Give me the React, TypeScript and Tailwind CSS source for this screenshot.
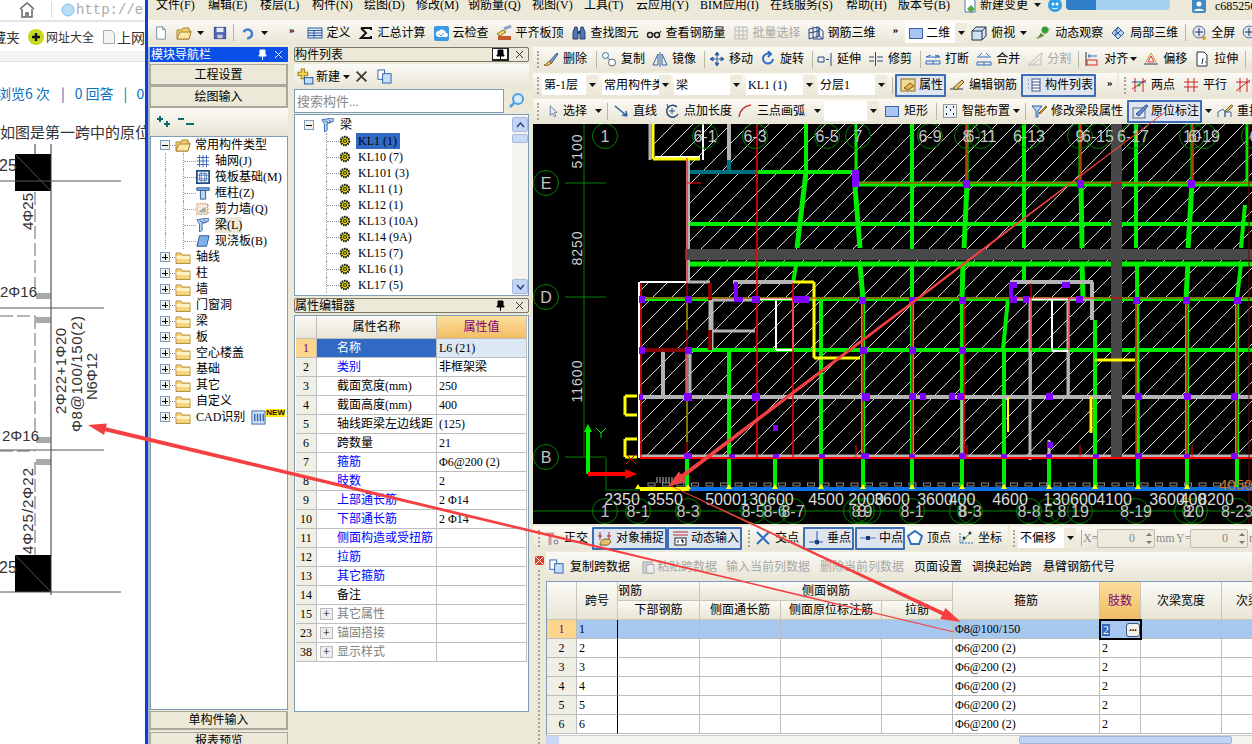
import React from "react";

type L = [number, number, number, number, number?];

const ICONS: Record<string, React.ReactNode> = {
  file: <><path d="M3 1h7l3 3v11H3z" fill="#fff" stroke="#6b7f9c" /><path d="M10 1v3h3" fill="#dfe7f2" stroke="#6b7f9c" /></>,
  folder: <><path d="M1 5h5l1-2h6v3h2l-2 8H1z" fill="#f4cf72" stroke="#a8842f" /><path d="M1 14l3-7h11l-2 7z" fill="#fbe6a6" stroke="#a8842f" /></>,
  save: <><rect x="1.5" y="1.5" width="13" height="13" fill="#4f67b5" stroke="#2c3f80" /><rect x="4" y="2" width="8" height="5" fill="#e8eef8" /><rect x="5" y="10" width="6" height="4" fill="#c7ccd6" /></>,
  undo: <path d="M3 7a5 5 0 1 1 4 7" fill="none" stroke="#3f7fd6" strokeWidth="3" />,
  def: <><rect x="1" y="3" width="14" height="10" fill="#dbe8f8" stroke="#2f5d9e" /><path d="M1 5.5h14M7 5.500v7.500M1 8h14M1 10.500h14" stroke="#2f5d9e" fill="none" /></>,
  sum: <path d="M3 3h10v2M3 3l5 5-5 5h10v-2" fill="none" stroke="#111" strokeWidth="2" />,
  cloud: <><rect x="1" y="1" width="15" height="15" rx="2" fill="#3a9be4" /><path d="M3 10a3 3 0 0 1 3-4 4 4 0 0 1 7 2 2 2 0 0 1 0 4H5z" fill="#fff" /><path d="M6 9l2 2 3-3" fill="none" stroke="#3a9be4" /></>,
  level: <><path d="M1 9l6-4 3 2-6 4z" fill="#f9d95b" stroke="#8a6d1b" /><path d="M8 4l7-3" stroke="#8da3c4" strokeWidth="3" /><rect x="2" y="11" width="13" height="4" fill="#c45a2c" /></>,
  binoc: <><path d="M2 14V7l2-5h2l1 5v7zM9 14V7l1-5h2l2 5v7z" fill="#4f78b8" stroke="#22416f" /><rect x="6.500" y="6" width="3" height="3" fill="#22416f" /></>,
  glass: <><circle cx="4" cy="10" r="2.500" fill="none" stroke="#222" strokeWidth="1.500" /><circle cx="11" cy="10" r="2.500" fill="none" stroke="#222" strokeWidth="1.500" /><path d="M6 9h3M13 9l2-3" stroke="#222" /></>,
  batch: <path d="M2 2h12v12H2zM2 6h12M2 10h12M6 2v12M10 2v12" fill="none" stroke="#bbb" />,
  g3d: <path d="M1 4l10-2v9L1 14zM5 1.500v12M9 1.500v12M1 8l10-2M11 3l4 3v8l-4-3zM5 14h10" fill="none" stroke="#28478c" />,
  rect: <rect x="1.500" y="3.500" width="13" height="10" fill="#a8c4f0" stroke="#3a64a8" />,
  box: <><path d="M1 6l4-4h10v9l-4 4H1z" fill="#cfe2f4" stroke="#234" /><path d="M1 6h10v9M11 6l4-4" fill="none" stroke="#234" /></>,
  orbit: <><circle cx="10" cy="5" r="3.500" fill="#2e9c3a" /><path d="M2 14l4-6 3 3z" fill="#5b6f2c" /><path d="M1 12c4 2 10-3 14-9" fill="none" stroke="#7bb84a" /></>,
  l3d: <path d="M2 8l6-6 6 6-6 6zM5 5l6 6M8 2l-3 9M11 5l-6 6" fill="#bcd6f2" stroke="#2f5d9e" />,
  zoom: <><circle cx="8" cy="7" r="6" fill="#dbe7f6" stroke="#56688a" /><path d="M8 3v8M4 7h8" stroke="#234" /><circle cx="13" cy="13" r="2" fill="#d89a45" /></>,
  brush: <><path d="M6 11L14 2l1 1-7 10z" fill="#7f9ec9" stroke="#3d5a8c" /><path d="M1 14c3 0 3-4 6-4l1 2c-1 2-4 3-7 2z" fill="#e9c25c" stroke="#8a6d1b" /></>,
  copy: <><circle cx="4.500" cy="4.500" r="3" fill="#fff" stroke="#3a6aa8" /><circle cx="11" cy="11.500" r="3.500" fill="#fff" stroke="#666" /><path d="M6 6l3 3" stroke="#3a6aa8" /></>,
  mirror: <path d="M1 14L6 3v11zM15 14L10 3v11zM8 1v15" fill="none" stroke="#3460a8" />,
  move: <path d="M8 1v14M1 8h14M8 1L6 4h4zM8 15l-2-3h4zM1 8l3-2v4zM15 8l-3-2v4z" fill="#3460a8" stroke="#3460a8" />,
  rotate: <path d="M13 8a5 5 0 1 1-3-5M8 0l3 3-3 3" fill="none" stroke="#2f6cc4" strokeWidth="2" />,
  extend: <path d="M1 6h6v5H1zM9 8.500h3M14 2v13" fill="none" stroke="#234a84" />,
  trim: <path d="M1 6h5M1 10h5M9 6h6M9 10h6M7.500 1v14" fill="none" stroke="#234a84" />,
  split: <path d="M6 4L1 6h14l-5-2M10 7l4-3M1 10h14v3H1zM8 10v3" fill="none" stroke="#2f6cc4" />,
  merge: <path d="M3 5l3-3M13 5l-3-3M1 6h14M1 11h14v3H1zM8 11v3" fill="none" stroke="#2f6cc4" />,
  divide: <path d="M1 14L12 4l3-2-1 5v7zM5 14l7-6" fill="none" stroke="#bcbcbc" />,
  align: <><path d="M2 1v14" stroke="#234" /><rect x="3" y="9" width="10" height="5" fill="none" stroke="#d22" /><path d="M4 5h9M4 5l2-2M4 5l2 2" fill="none" stroke="#2f6cc4" /></>,
  offset: <><path d="M8 2l6 11H2z" fill="#f7f7f7" stroke="#c93" /><path d="M8 5l3 6H5z" fill="none" stroke="#d33" /><path d="M1 13h14" stroke="#2d6bbd" /></>,
  stretch: <path d="M3 1h7l3 3v11H3zM9 7l-1 6M11 11h1" fill="#fff" stroke="#234" />,
  attr: <><rect x="1" y="2" width="14" height="12" fill="#f1d99a" stroke="#8a6d1b" /><path d="M4 11l6-5 4 3-6 4z" fill="#e5b24b" stroke="#7c5c11" /></>,
  edit: <><path d="M1 12h13" stroke="#333" /><path d="M4 11l9-8 2 2-8 8z" fill="#e4c36a" stroke="#6d5a20" /></>,
  list: <><path d="M2 3h2M2 7h2M2 11h2" stroke="#567" strokeDasharray="1 1" fill="none" /><rect x="6" y="2" width="8" height="12" fill="#fff" stroke="#3d5a8c" /><path d="M6 5h8M6 8h8M6 11h8" stroke="#3d5a8c" /></>,
  twopt: <><path d="M4 1v14M12 1v14M1 12L15 3" stroke="#c22" fill="none" /><path d="M1 5h14" stroke="#234a84" /><circle cx="8" cy="8" r="1.500" fill="#2a2" /></>,
  para: <path d="M1 5h14M1 10h14M5 1v14M11 1v14" stroke="#c22" fill="none" />,
  slant: <><path d="M5 1v14M12 1v14M1 5h14M1 14L15 3" stroke="#c22" fill="none" /></>,
  cursor: <path d="M4 1l8 8-3 .5 2 4-2 1-2-4-3 2z" fill="#e8eef8" stroke="#55688a" />,
  line: <><path d="M2 3l12 10M14 13l-5-1M14 13l-1-5" fill="none" stroke="#2f5d9e" strokeWidth="1.500" /></>,
  len: <><path d="M13 4A6 6 0 1 0 14 11" fill="none" stroke="#234a84" strokeWidth="1.500" /><path d="M8 5v6M5 8h6M3 1l1 4 3-3" stroke="#234a84" fill="none" /></>,
  arc: <path d="M2 14C3 7 7 3 14 2" fill="none" stroke="#c33" strokeWidth="1.500" />,
  smart: <><rect x="1.500" y="1.500" width="13" height="13" fill="#e8f0fa" stroke="#444" strokeDasharray="1 1" /><path d="M4 4h1M11 4h1M4 11h1M11 11h1M8 7h1" stroke="#222" strokeWidth="2" /></>,
  filter: <><path d="M1 3h10L7 8v6H5V8z" fill="#bcd6f2" stroke="#3460a8" /><path d="M8 10l7-7 1 1-7 7z" fill="#d9a441" stroke="#7c5c11" /></>,
  annot: <><rect x="1" y="5" width="12" height="10" fill="#dfe7f2" stroke="#567" /><path d="M4 11L14 2l2 1-9 10z" fill="#6b93d6" stroke="#234a84" /></>,
  pull: <><path d="M1 14v-5l5-3 2 3v5M8 14V9h6v5" fill="none" stroke="#3a6aa8" /><path d="M8 8l6-6 2 1-6 6z" fill="#e4c36a" stroke="#6d5a20" /></>,
  ortho: <><path d="M2 4h8M6 4v11" stroke="#c99" strokeWidth="3" /><circle cx="12" cy="12" r="2" fill="none" stroke="#678" /></>,
  snap: <><path d="M3 2v8M12 2v8M1 6h4M10 6h4" stroke="#a23" /><path d="M3 15c0-4 3-6 6-6s6 1 4 4-5 2-10 2z" fill="#e4c36a" stroke="#7c5c11" /></>,
  dyn: <><path d="M1 2h15M1 5h15" stroke="#b33" /><rect x="3" y="8" width="11" height="7" fill="#fff" stroke="#222" /><path d="M6 10v3M9 10h2v3" stroke="#222" /></>,
  cross: <path d="M2 2l12 12M14 2L2 14" stroke="#2f6cc4" strokeWidth="2" fill="none" />,
  perp: <><path d="M1 12h14M9 1v14" stroke="#5b86c4" strokeWidth="1.500" /><rect x="7" y="10" width="4" height="4" fill="#1d3d7a" /></>,
  mid: <><path d="M0 8h16" stroke="#8fb0e0" strokeWidth="2" /><rect x="6" y="6" width="4" height="4" fill="#1d3d7a" /></>,
  vertex: <path d="M8 1l7 5-3 8H4L1 6z" fill="#fff" stroke="#2f6cc4" strokeWidth="2" />,
  coord: <><path d="M2 3v10h13" stroke="#2f6cc4" strokeDasharray="2 1" fill="none" /><path d="M3 13L12 3" stroke="#2a4" /><circle cx="12" cy="3" r="1.500" fill="#234" /><circle cx="6" cy="8" r="1.500" fill="#234" /></>,
  grid: <path d="M1 4h14M1 8h14M1 12h14M4 1v14M8 1v14M12 1v14" stroke="#2f5db0" fill="none" />,
  raft: <><rect x="1" y="1" width="14" height="14" fill="none" stroke="#234a84" strokeWidth="2" /><path d="M4 4h8v8H4zM1 6h14M1 10h14M6 1v14M10 1v14" stroke="#4f78b8" fill="none" /></>,
  col: <><path d="M1 2h14v3H1z" fill="#7fb0e8" stroke="#234a84" /><path d="M5 5h6v10H5z" fill="#bcd6f2" stroke="#234a84" /></>,
  wall: <><rect x="1" y="2" width="12" height="12" fill="#f5ecdc" stroke="#c67b4b" strokeDasharray="2 1" /><path d="M3 12c2-3 5-6 8-6v6z" fill="#aaa" /><path d="M13 4h2M13 8h2M13 12h2" stroke="#e09030" /></>,
  beam: <><path d="M1 2l13-2v4L7 6v8l-3 2V7z" fill="#bcd6f2" stroke="#2f5db0" /><path d="M4 3l6 3M9 2l3 3" stroke="#2f5db0" /></>,
  slab: <path d="M4 2h11l-3 12H1z" fill="#7fb0e8" stroke="#234a84" />,
  gear: <><circle cx="8" cy="8" r="5.500" fill="#ffe800" stroke="#111" strokeDasharray="2 1" strokeWidth="3" /><circle cx="8" cy="8" r="2" fill="#ffe800" stroke="#222" strokeWidth="1.500" /></>,
  add: <><path d="M4 1h3v3h3v3H7v3H4V7H1V4h3z" fill="#f3d356" stroke="#a5861d" /><rect x="7" y="9" width="8" height="6" fill="#c7dcf5" stroke="#2f5db0" /></>,
  del: <path d="M2 2l12 12M14 2L2 14" stroke="#3a3a3a" strokeWidth="2.200" />,
  dup: <><rect x="1" y="1" width="7" height="10" fill="#fff" stroke="#2f5db0" /><rect x="6" y="5" width="9" height="10" fill="#c7dcf5" stroke="#2f5db0" /></>,
  paste: <><rect x="2" y="3" width="10" height="12" fill="#cfcfcf" stroke="#aaa" /><rect x="6" y="6" width="8" height="9" fill="#eee" stroke="#aaa" /></>,
  search: <><circle cx="9" cy="6" r="5" fill="#d9ecfb" stroke="#4aa2e2" strokeWidth="2" /><path d="M5 10l-4 4" stroke="#4aa2e2" strokeWidth="2.500" /></>,
  user: <><rect x="1" y="1" width="14" height="14" rx="2" fill="#3f89c9" /><circle cx="8" cy="6" r="2.500" fill="#fff" /><path d="M3 13c1-3 9-3 10 0z" fill="#fff" /></>,
  face: <><circle cx="8" cy="8" r="7" fill="#2f9ee8" /><circle cx="6" cy="7" r="1.500" fill="#fff" /><circle cx="10" cy="7" r="1.500" fill="#fff" /><path d="M5 11c2 1 4 1 6 0" stroke="#fff" fill="none" /></>,
  change: <><path d="M3 1h7l3 3v11H3z" fill="#fff" stroke="#4f78b8" /><path d="M9 8l4 4-4 4-4-4z" fill="#5aa83e" /></>,
  cad: <><rect x="1" y="1" width="14" height="14" fill="#cfe2f8" stroke="#3a64a8" /><path d="M4 4v8M7 4v8M10 4v8M13 4v8" stroke="#3a64a8" strokeWidth="1.500" /></>,
};

function Ic({ n, s = 16 }: { n: string; s?: number }) {
  return (
    <svg width={s} height={s} viewBox="0 0 16 16" className="shrink-0">
      {ICONS[n]}
    </svg>
  );
}

function Caret({ ml = "" }: { ml?: string }) {
  return (
    <svg width="7" height="4" viewBox="0 0 7 4" className={`shrink-0 ${ml}`}>
      <path d="M0 0h7L3.500 4z" fill="#111" />
    </svg>
  );
}

function Sep({ ml = "" }: { ml?: string }) {
  return <div className={`w-px h-[17px] bg-[#b9b7a6] shrink-0 ${ml}`} />;
}

function Grip({ ml = "" }: { ml?: string }) {
  return <div className={`w-[3px] h-[17px] shrink-0 border-l-2 border-dotted border-[#a8a693] ${ml}`} />;
}

function T({ i, t, ml = "", gray = false }: { i: string; t: string; ml?: string; gray?: boolean }) {
  return (
    <div className={`flex items-center shrink-0 ${ml}`}>
      <Ic n={i} />
      <span className={`ml-1 whitespace-nowrap ${gray ? "text-[#a8a8a8]" : ""}`}>{t}</span>
    </div>
  );
}

function Sel({ i, t, ml = "", w }: { i: string; t: string; ml?: string; w: string }) {
  return (
    <div className={`flex items-center shrink-0 h-[23px] px-[3px] border-2 border-[#3d6db4] bg-[#dfe5ee] rounded-[1px] ${w} ${ml}`}>
      <Ic n={i} />
      <span className="ml-[3px] whitespace-nowrap">{t}</span>
    </div>
  );
}

function Combo({ t, w, ml = "" }: { t: string; w: string; ml?: string }) {
  return (
    <div className={`flex items-center shrink-0 h-[20px] bg-white ${w} ${ml}`}>
      <span className="pl-[2px] flex-1 overflow-hidden whitespace-nowrap">{t}</span>
      <div className="w-[12px] h-full bg-[#eeebdd] flex items-center justify-center">
        <Caret />
      </div>
    </div>
  );
}

function More({ ml = "" }: { ml?: string }) {
  return <span className={`shrink-0 font-bold text-[11px] -mt-[6px] ${ml}`}>»</span>;
}

const BAR = "bg-linear-to-b from-[#fbfaf5] to-[#e8e5d5]";

function Menu() {
  const m: [string, string][] = [
    ["文件(F)", "w-[40px]"], ["编辑(E)", "w-[40px]"], ["楼层(L)", "w-[40px]"], ["构件(N)", "w-[40px]"],
    ["绘图(D)", "w-[40px]"], ["修改(M)", "w-[40px]"], ["钢筋量(Q)", "w-[52px]"], ["视图(V)", "w-[40px]"],
    ["工具(T)", "w-[40px]"], ["云应用(Y)", "w-[52px]"], ["BIM应用(I)", "w-[58px]"], ["在线服务(S)", "w-[64px]"],
    ["帮助(H)", "w-[40px]"], ["版本号(B)", "w-[52px]"],
  ];
  return (
    <div className="h-[20px] flex items-start pl-2 gap-3 overflow-hidden relative bg-[#ece9d8] shrink-0">
      <div className="flex gap-3 -mt-[1px] leading-[13px]">
        {m.map(([t, w]) => (
          <span key={t} className={`whitespace-nowrap ${w}`}>{t}</span>
        ))}
      </div>
      <div className="flex items-center -mt-[3px]">
        <Ic n="change" />
        <span className="ml-[2px]">新建变更</span>
        <Caret ml="ml-[6px]" />
        <div className="ml-[6px]"><Ic n="face" /></div>
      </div>
      <div className="absolute left-[918px] top-0 w-[104px] h-[10px] rounded-b-[4px] overflow-hidden flex">
        <div className="w-[30px] bg-[#2f7fc9]" />
        <div className="flex-1 bg-[#a6d2f2]" />
      </div>
      <div className="absolute left-[1043px] top-[-2px] flex items-center">
        <Ic n="user" />
        <span className="ml-2 whitespace-nowrap">c685256</span>
      </div>
    </div>
  );
}

function MainBar() {
  return (
    <div className={`h-[25px] flex items-center shrink-0 overflow-hidden ${BAR}`}>
      <div className="ml-[6px]"><Ic n="file" s={14} /></div>
      <div className="ml-[8px]"><Ic n="folder" /></div>
      <Caret ml="ml-[5px]" />
      <div className="ml-[9px]"><Ic n="save" s={14} /></div>
      <Sep ml="ml-[6px]" />
      <div className="ml-[7px]"><Ic n="undo" s={14} /></div>
      <Caret ml="ml-[6px]" />
      <More ml="ml-[21px]" />
      <T i="def" t="定义" ml="ml-[12px]" />
      <T i="sum" t="汇总计算" ml="ml-[7px]" />
      <T i="cloud" t="云检查" ml="ml-[7px]" />
      <T i="level" t="平齐板顶" ml="ml-[7px]" />
      <T i="binoc" t="查找图元" ml="ml-[7px]" />
      <T i="glass" t="查看钢筋量" ml="ml-[7px]" />
      <T i="batch" t="批量选择" ml="ml-[7px]" gray />
      <T i="g3d" t="钢筋三维" ml="ml-[7px]" />
      <More ml="ml-[17px]" />
      <div className="ml-[7px] w-[62px] h-[20px] bg-white flex items-center shrink-0">
        <div className="ml-[3px]"><Ic n="rect" /></div>
        <span className="ml-[2px] flex-1">二维</span>
        <div className="w-[12px] h-full bg-[#eeebdd] flex items-center justify-center"><Caret /></div>
      </div>
      <T i="box" t="俯视" ml="ml-[4px]" />
      <Caret ml="ml-[5px]" />
      <T i="orbit" t="动态观察" ml="ml-[8px]" />
      <T i="l3d" t="局部三维" ml="ml-[7px]" />
      <Sep ml="ml-[7px]" />
      <T i="zoom" t="全屏" ml="ml-[5px]" />
      <div className="ml-[6px]"><Ic n="zoom" /></div>
    </div>
  );
}

function Row1() {
  return (
    <div className={`h-[24px] flex items-center shrink-0 overflow-hidden ${BAR}`}>
      <Grip ml="ml-[4px]" />
      <T i="brush" t="删除" ml="ml-[3px]" />
      <Sep ml="ml-[9px]" />
      <T i="copy" t="复制" ml="ml-[4px]" />
      <T i="mirror" t="镜像" ml="ml-[7px]" />
      <Sep ml="ml-[8px]" />
      <T i="move" t="移动" ml="ml-[4px]" />
      <T i="rotate" t="旋转" ml="ml-[7px]" />
      <Sep ml="ml-[8px]" />
      <T i="extend" t="延伸" ml="ml-[4px]" />
      <T i="trim" t="修剪" ml="ml-[7px]" />
      <Sep ml="ml-[8px]" />
      <T i="split" t="打断" ml="ml-[4px]" />
      <T i="merge" t="合并" ml="ml-[7px]" />
      <T i="divide" t="分割" ml="ml-[7px]" gray />
      <Sep ml="ml-[7px]" />
      <T i="align" t="对齐" ml="ml-[5px]" />
      <Caret ml="ml-[2px]" />
      <T i="offset" t="偏移" ml="ml-[6px]" />
      <T i="stretch" t="拉伸" ml="ml-[7px]" />
      <Sep ml="ml-[7px]" />
    </div>
  );
}

function Row2() {
  return (
    <div className="h-[24px] flex items-center shrink-0 overflow-hidden">
      <div className={`h-full w-[584px] flex items-center shrink-0 ${BAR}`}>
        <Grip ml="ml-[4px]" />
        <Combo t="第-1层" w="w-[56px]" ml="ml-[2px]" />
        <Combo t="常用构件类型" w="w-[69px]" ml="ml-[4px]" />
        <Combo t="梁" w="w-[68px]" ml="ml-[3px]" />
        <Combo t="KL1 (1)" w="w-[69px]" ml="ml-[4px]" />
        <Combo t="分层1" w="w-[69px]" ml="ml-[3px]" />
        <Sep ml="ml-[5px]" />
        <Sel i="attr" t="属性" w="w-[51px]" ml="ml-[2px]" />
        <T i="edit" t="编辑钢筋" ml="ml-[3px]" />
        <Sel i="list" t="构件列表" w="w-[75px]" ml="ml-[4px]" />
        <More ml="ml-[11px]" />
      </div>
      <div className={`ml-[2px] h-full flex-1 flex items-center ${BAR}`}>
        <Grip ml="ml-[5px]" />
        <T i="twopt" t="两点" ml="ml-[4px]" />
        <T i="para" t="平行" ml="ml-[8px]" />
        <div className="ml-[8px]"><Ic n="slant" /></div>
      </div>
    </div>
  );
}

function Row3() {
  return (
    <div className={`h-[24px] flex items-center shrink-0 overflow-hidden ${BAR}`}>
      <Grip ml="ml-[4px]" />
      <div className="ml-[7px]"><Ic n="cursor" s={13} /></div>
      <span className="ml-[3px] shrink-0">选择</span>
      <Caret ml="ml-[8px]" />
      <Sep ml="ml-[5px]" />
      <T i="line" t="直线" ml="ml-[5px]" />
      <T i="len" t="点加长度" ml="ml-[7px]" />
      <T i="arc" t="三点画弧" ml="ml-[5px]" />
      <Caret ml="ml-[9px]" />
      <Combo t="" w="w-[55px]" ml="ml-[3px]" />
      <T i="rect" t="矩形" ml="ml-[5px]" />
      <Sep ml="ml-[8px]" />
      <T i="smart" t="智能布置" ml="ml-[5px]" />
      <Caret ml="ml-[3px]" />
      <Sep ml="ml-[5px]" />
      <T i="filter" t="修改梁段属性" ml="ml-[5px]" />
      <Sel i="annot" t="原位标注" w="w-[75px]" ml="ml-[4px]" />
      <Caret ml="ml-[3px]" />
      <T i="pull" t="重拉" ml="ml-[5px]" />
    </div>
  );
}

function StatusBar() {
  return (
    <div className="h-[24px] mt-[2px] flex items-center shrink-0 overflow-hidden">
      <div className={`h-full w-[475px] flex items-center shrink-0 ${BAR}`}>
        <Grip ml="ml-[5px]" />
        <T i="ortho" t="正交" ml="ml-[3px]" />
        <Sel i="snap" t="对象捕捉" w="w-[75px]" ml="ml-[4px]" />
        <Sel i="dyn" t="动态输入" w="w-[75px]" />
        <Grip ml="ml-[6px]" />
        <T i="cross" t="交点" ml="ml-[4px]" />
        <Sel i="perp" t="垂点" w="w-[51px]" ml="ml-[4px]" />
        <Sel i="mid" t="中点" w="w-[50px]" ml="ml-[1px]" />
        <T i="vertex" t="顶点" ml="ml-[2px]" />
        <T i="coord" t="坐标" ml="ml-[7px]" />
      </div>
      <div className={`ml-[2px] h-full flex-1 flex items-center ${BAR}`}>
        <Grip ml="ml-[3px]" />
        <Combo t="不偏移" w="w-[58px]" ml="ml-[2px]" />
        <div className="ml-[5px] w-px h-[16px] bg-[#aaa]" />
        <span className="ml-[1px] w-[14px] text-[#888]">X=</span>
        <Num />
        <span className="ml-[1px] w-[20px] text-[#888]">mm</span>
        <span className="w-[14px] text-[#888]">Y=</span>
        <Num />
        <span className="ml-[1px] text-[#888]">m</span>
      </div>
    </div>
  );
}

function Num() {
  return (
    <div className="w-[58px] h-[19px] border border-[#bdbbaa] bg-[#eeebdd] rounded-[2px] flex items-center justify-end shrink-0">
      <span className="text-[#888] mr-[9px]">0</span>
      <div className="w-[10px] flex flex-col items-center gap-[5px]">
        <svg width="6" height="3" viewBox="0 0 6 3"><path d="M0 3L3 0l3 3z" fill="#777" /></svg>
        <svg width="6" height="3" viewBox="0 0 6 3"><path d="M0 0l3 3 3-3z" fill="#777" /></svg>
      </div>
    </div>
  );
}

/* ---------- CAD canvas ---------- */
const GRN: L[] = [
  [757,172,853,172,4],[690,224,1252,224,4],[690,264,1252,264,5],[853,184,1252,184,5],[640,299,1252,299,4],[686,350,1252,350,4],
  [806,124,806,172,4],[806,172,797,248,5],[796,265,793,283,4],
  [856,124,856,170,3],[855,187,860,248,5],[860,265,863,299,5],[863,299,863,490,4],
  [687,299,687,330,2],[687,350,687,442,2],[687,458,687,490,4],[729,350,729,490,4],[775,458,775,490,4],[821,300,821,490,4],
  [912,124,912,249,4],[912,264,912,490,4],[967,124,967,183,3],[967,183,964,248,5],[963,264,962,298,5],[962,298,962,490,4],
  [1024,124,1024,248,4],[1024,264,1024,282,4],[1080,124,1080,183,3],[1081,183,1082,248,5],[1082,264,1083,298,5],
  [1136,124,1136,248,4],[1137,264,1138,490,4],[1192,124,1192,183,3],[1192,183,1188,248,5],[1188,264,1186,298,5],[1187,298,1187,490,4],
  [1247,124,1247,183,3],[1245,205,1241,248,4],[1241,264,1237,298,4],[1237,298,1237,490,4],
  [1008,298,1003,350,4],[1004,350,1004,490,4],[1049,458,1049,490,4],[1095,320,1095,490,4],[1031,299,1031,397,2],[1069,300,1069,397,2],
];
const RED: L[] = [
  [757,124,757,458,1.500],[641,283,641,458,1.500],[687,158,687,458,1],[793,283,793,458,1.500],[863,300,863,458,1.500],[912,300,912,458,1.500],
  [964,300,964,458,1.500],[1031,283,1031,350,1],[1069,298,1069,350,1],[1136,300,1136,458,1.500],[1192,124,1192,183,1.500],[967,124,967,183,1.500],
  [1080,124,1080,183,1.500],[1187,300,1187,458,1.500],[1237,300,1237,458,1.500],[853,183,1252,183,1],[640,298,1252,298,1],[640,458,1252,458,2],
  [687,183,701,183,1],[757,445,757,458,1],[856,445,856,458,1],[967,445,967,458,1],[1080,445,1080,458,1],[1192,445,1192,458,1],
];
const GRY: L[] = [
  [688,160,688,283,4],[640,397,1252,397,4],[640,456,1252,456,3],[688,282,710,282,3],[733,282,793,282,4],[650,124,650,160,3],[729,124,729,160,4],
  [711,300,711,350,5],[712,300,755,300,3],[712,331,755,331,3],[1010,282,1093,282,4],[1092,282,1092,320,4],
  [1010,299,1093,299,3],[1030,299,1030,460,3],[1068,299,1068,397,3],[962,397,962,456,3],[1049,440,1049,456,3],[663,350,663,397,4],[687,350,687,397,3],[690,350,690,397,3],
  [925,397,950,397,4],
];
const WHT: L[] = [
  [640,282,688,282,2],[639,282,639,458,2],[655,157,700,157,2],[703,124,703,160,2],[757,299,793,299,2],[776,299,776,350,2],[776,350,793,350,2],[793,299,793,350,2],
  [1031,299,1068,299,2],[1052,299,1052,350,2],[1052,351,1068,351,2],
];
const YEL: L[] = [
  [653,124,653,159,3],[653,159,700,159,3],[793,282,814,282,3],[814,282,814,358,3],[814,358,860,358,3],[1008,397,1008,432,2],[1091,397,1091,433,3],[1095,360,1135,360,3],
  [625,396,637,396,3],[625,396,625,415,3],[625,415,637,415,3],[625,439,637,439,3],[625,439,625,457,3],[625,457,637,457,3],[640,489,689,489,4],
];
const PUR: [number, number, number, number][] = [
  [852,170,7,17],[639,296,6,7],[685,296,7,7],[734,282,4,18],[734,297,9,5],[752,296,8,7],[793,296,16,7],[859,297,7,7],[639,347,6,7],[685,347,7,7],[860,347,7,7],
  [963,180,7,8],[1077,180,7,8],[1188,180,7,8],[909,297,6,7],[959,297,7,7],[1009,282,8,6],[1009,282,4,18],[1009,296,8,7],[1062,282,8,6],[1023,296,6,7],[1076,296,7,7],[1133,297,7,7],[1183,297,7,7],[1234,297,7,7],
  [909,347,7,7],[959,347,7,7],[684,393,8,8],[752,393,8,8],[862,393,8,8],[909,393,7,7],[920,393,6,7],[949,393,6,7],[957,393,7,7],[1046,393,7,7],[1135,393,7,7],[1184,393,7,7],[1231,393,7,7],
  [639,394,4,6],[684,453,8,6],[729,454,6,4],[773,454,6,4],[819,454,6,4],[861,453,8,6],[909,454,6,4],[959,453,7,6],[1001,454,6,4],[1046,454,6,4],[1093,454,6,4],[1135,453,7,6],[1184,454,6,4],[1231,453,7,6],[773,425,5,6],[1047,442,6,6],
];
const CIR: [number, number, string][] = [
  [546,183,"E"],[546,297,"D"],[546,457,"B"],[605,136,"1"],[705,136,"6-1"],[755,136,"6-3"],[827,136,"6-5"],[858,136,"7"],[930,136,"6-9"],[967,136,"8"],[981,136,"6-11"],[1029,136,"6-13"],
  [1080,136,"9"],[1098,136,"6-15"],[1133,136,"6-17"],[1192,136,"10"],[1204,136,"6-19"],[1254,136,"6"],
  [605,511,"1"],[638,511,"8-1"],[688,511,"8-3"],[753,511,"8-5"],[775,511,"8-6"],[793,511,"8-7"],[856,511,"8"],[862,511,"8"],[868,511,"9"],
  [912,511,"8-1"],[962,511,"8"],[970,511,"8-3"],[1029,511,"8-8"],[1049,511,"5"],[1062,511,"8"],[1080,511,"19"],[1136,511,"8-19"],[1187,511,"8"],[1195,511,"20"],[1237,511,"8-23"],
];
const DIM: [number, string][] = [
  [622,"2350"],[665,"3550"],[723,"5000"],[767,"130600"],[826,"4500"],[866,"2000"],[892,"3600"],[935,"3600"],[962,"400"],[1010,"4600"],[1070,"130600"],[1114,"4100"],[1167,"3600"],[1193,"400"],[1216,"8200"],
];

function lines(a: L[], c: string, key: string) {
  return a.map((l, i) => (
    <line key={key + i} x1={l[0]} y1={l[1]} x2={l[2]} y2={l[3]} stroke={c} strokeWidth={l[4] ?? 1} />
  ));
}

function Canvas() {
  const dashes = Array.from({ length: 42 }, (_, i) => 648 + i * 14.500);
  return (
    <div className="h-[400px] mt-[1px] bg-black shrink-0 overflow-hidden">
      <svg width="719" height="400" viewBox="533 124 719 400" className="block">
        <defs>
          <pattern id="hat" width="19" height="19" patternUnits="userSpaceOnUse">
            <path d="M0 19L19 0" stroke="#d8d8d8" strokeWidth="1" shapeRendering="crispEdges" />
          </pattern>
        </defs>
        <path d="M689 124H1252V458H638V283H689Z" fill="url(#hat)" />
        <rect x="652" y="124" width="51" height="36" fill="url(#hat)" />
        {lines([[584,124,584,458,1],[565,183,606,183,1],[565,297,606,297,1],[565,457,606,457,1],[606,490,1252,490,1],[606,458,606,490,1],[533,511,1252,511,1]], "#008000", "a")}
        {lines(GRN, "#00ee00", "g")}
        {lines(GRY, "#b4b4b4", "y")}
        {lines(WHT, "#ffffff", "w")}
        <line x1="690" y1="172" x2="757" y2="172" stroke="#007080" strokeWidth="4" />
        <line x1="729" y1="160" x2="729" y2="172" stroke="#007080" strokeWidth="4" />
        <line x1="710" y1="283" x2="710" y2="300" stroke="#800000" strokeWidth="4" />
        <line x1="710" y1="330" x2="710" y2="350" stroke="#800000" strokeWidth="4" />
        <line x1="640" y1="350" x2="686" y2="350" stroke="#800000" strokeWidth="4" />
        <rect x="685" y="249" width="567" height="11" fill="#484848" />
        <rect x="1111" y="124" width="11" height="334" fill="#484848" />
        {lines(YEL, "#ffff00", "e")}
        {lines(RED, "#ff0000", "r")}
        <line x1="1249" y1="124" x2="1249" y2="524" stroke="#800000" strokeWidth="1" />
        {PUR.map((p, i) => (
          <rect key={i} x={p[0]} y={p[1]} width={p[2]} height={p[3]} fill="#8000ff" />
        ))}
        <rect x="689" y="487" width="563" height="4" fill="#0a72e8" />
        {dashes.map((x, i) => (
          <rect key={i} x={x} y="483" width="7" height="3" fill="none" stroke="#888" strokeWidth="1" />
        ))}
        {[638,688,729,775,821,863,912,962,1004,1049,1095,1138,1187].map((x, i) => (
          <path key={i} d={`M${x - 3} 489l3-5 3 5z`} fill="#ffff00" />
        ))}
        <text x="576" y="145" transform="rotate(-90 582 145)" fill="#ccc" fontFamily="Liberation Sans" fontSize="14" textAnchor="middle" letterSpacing="1">5100</text>
        <text x="576" y="242" transform="rotate(-90 582 242)" fill="#ccc" fontFamily="Liberation Sans" fontSize="14" textAnchor="middle" letterSpacing="1">8250</text>
        <text x="576" y="375" transform="rotate(-90 582 375)" fill="#ccc" fontFamily="Liberation Sans" fontSize="14" textAnchor="middle" letterSpacing="1">11600</text>
        {CIR.map(([x, y, t], i) => (
          <g key={i}>
            <circle cx={x} cy={y} r="12.500" fill="none" stroke="#008000" strokeWidth="1" />
            <text x={x} y={y + 6} fill="#c4c4c4" fontFamily="Liberation Sans" fontSize="16" textAnchor="middle">{t}</text>
          </g>
        ))}
        {DIM.map(([x, t], i) => (
          <text key={i} x={x} y="505" fill="#ddd" fontFamily="Liberation Sans" fontSize="16" textAnchor="middle">{t}</text>
        ))}
        <text x="1219" y="490" fill="#c8703a" fontFamily="Liberation Sans" fontSize="15">4050</text>
        <line x1="588" y1="474" x2="588" y2="430" stroke="#00ee00" strokeWidth="4" />
        <path d="M584 432L588 424l4 8z" fill="#00ee00" />
        <path d="M601 432V438M596 428l5 5 5-5" stroke="#00ee00" fill="none" />
        <line x1="588" y1="474" x2="626" y2="474" stroke="#ff0000" strokeWidth="4" />
        <path d="M625 469l12 5-12 5z" fill="#ff0000" />
        <path d="M626 454l10 10M636 454l-10 10" stroke="#c00" />
        <g stroke="#bbb">{[657,660,663,666,669,672,675,678,681,684].map((x) => <line key={x} x1={x} y1="477" x2={x} y2="483" />)}</g>
      </svg>
    </div>
  );
}

/* ---------- Left CAD ---------- */
function Hook({ y }: { y: number }) {
  return (
    <g stroke="#555" strokeWidth="1">
      <line x1="36" y1={y - 2} x2="51" y2={y - 2} />
      <line x1="36" y1={y} x2="51" y2={y} />
      <line x1="36" y1={y + 2} x2="51" y2={y + 2} />
    </g>
  );
}

function LeftDrawing() {
  const fs = { fill: "#333", fontFamily: "Liberation Sans" };
  return (
    <svg width="145" height="456" viewBox="0 144 145 456" className="block mt-[2px] shrink-0">
      <rect x="15" y="154" width="36" height="37" fill="#000" />
      <rect x="15" y="555" width="36" height="37" fill="#000" />
      <path d="M15 154l36 37M15 555l36 37" stroke="#555" />
      <path d="M35 144v10M51 144V595" stroke="#333" fill="none" />
      <path d="M0 181h121M0 592h121M0 308h104M0 450h104" stroke="#555" fill="none" />
      <path d="M35 192V296M35 316v118M35 462v93M0 316h35M0 451h35" stroke="#666" strokeDasharray="13 4" fill="none" />
      <Hook y={296} />
      <Hook y={320} />
      <Hook y={440} />
      <Hook y={462} />
      <text x="-1" y="171" fontSize="16" {...fs}>25</text>
      <text x="-1" y="573" fontSize="16" {...fs}>25</text>
      <text x="0" y="297" fontSize="15" {...fs}>2Φ16</text>
      <text x="2" y="441" fontSize="15" {...fs}>2Φ16</text>
      <text transform="translate(33 230) rotate(-90)" fontSize="15" {...fs}>4Φ25</text>
      <text transform="translate(33 554) rotate(-90)" fontSize="15" textLength="86" {...fs}>4Φ25/2Φ22</text>
      <text transform="translate(66 414) rotate(-90)" fontSize="15" textLength="86" {...fs}>2Φ22+1Φ20</text>
      <text transform="translate(82 432) rotate(-90)" fontSize="15" textLength="116" {...fs}>Φ8@100/150(2)</text>
      <text transform="translate(97 400) rotate(-90)" fontSize="15" textLength="47" {...fs}>N6Φ12</text>
    </svg>
  );
}

function Browser() {
  return (
    <div className="w-[145px] shrink-0 bg-white flex flex-col overflow-hidden font-['Noto_Sans_CJK_SC',sans-serif]">
      <div className="h-[22px] flex items-center border-b-2 border-[#e5e5e5] shrink-0">
        <svg width="16" height="16" viewBox="0 0 16 16" className="ml-[19px] shrink-0">
          <path d="M1 7l7-6 7 6M3 7v8h4v-4h2v4h4V7" fill="none" stroke="#666" strokeWidth="1.500" />
        </svg>
        <div className="ml-[16px] w-px h-[16px] bg-[#ddd]" />
        <svg width="14" height="14" viewBox="0 0 14 14" className="ml-[9px] shrink-0">
          <circle cx="7" cy="7" r="6" fill="#b8def8" stroke="#7bbcec" />
        </svg>
        <span className="ml-[1px] text-[14px] text-[#aaa] font-['Liberation_Mono',monospace] whitespace-nowrap">http://e</span>
      </div>
      <div className="h-[29px] flex items-center text-[14px] text-[#333] shrink-0 whitespace-nowrap">
        <span className="w-[28px] overflow-hidden flex justify-end"><span className="-ml-[10px] mr-[8px]">藏夹</span></span>
        <svg width="16" height="16" viewBox="0 0 16 16" className="shrink-0">
          <circle cx="8" cy="8" r="8" fill="#c8d820" />
          <path d="M8 4v8M4 8h8" stroke="#111" strokeWidth="2.500" />
        </svg>
        <span className="ml-[2px] text-[12px]">网址大全</span>
        <svg width="12" height="14" viewBox="0 0 12 14" className="ml-[9px] shrink-0">
          <path d="M.5.500h8l3 3v10H.500z" fill="#f4f4f4" stroke="#aaa" />
        </svg>
        <span className="ml-[2px]">上网</span>
      </div>
      <div className="h-[11px] bg-[#f4f4f4] border-b border-[#e2e2e2] shrink-0" />
      <div className="h-[31px] mt-[15px] flex items-center text-[#0b6fbe] text-[14px] whitespace-nowrap shrink-0 overflow-hidden">
        <span className="-ml-[3px]">浏览6 次</span>
        <span className="ml-[11px]">|</span>
        <span className="ml-[10px]">0 回答</span>
        <span className="ml-[10px]">|</span>
        <span className="ml-[9px]">0</span>
      </div>
      <div className="mt-[14px] h-[20px] text-[15px] text-[#333] whitespace-nowrap shrink-0 leading-[20px]">如图是第一跨中的原位</div>
      <LeftDrawing />
    </div>
  );
}

/* ---------- Panels ---------- */
function Pin({ c = "#000" }: { c?: string }) {
  return (
    <svg width="9" height="11" viewBox="0 0 9 11">
      <path d="M2 1h5v5h1v1H1V6h1zM4.500 7v4" fill={c} stroke={c} />
    </svg>
  );
}
function XMark({ c = "#333" }: { c?: string }) {
  return (
    <svg width="9" height="9" viewBox="0 0 9 9">
      <path d="M1 1l7 7M8 1L1 8" stroke={c} />
    </svg>
  );
}

function Expander({ open = false }: { open?: boolean }) {
  return (
    <span className="relative w-[10px] h-[10px] border border-[#7f9db9] bg-[#f1f0e8] shrink-0 flex items-center justify-center">
      <span className="w-[6px] h-px bg-black" />
      {!open && <span className="absolute w-px h-[6px] bg-black" />}
    </span>
  );
}

function GuideH({ w }: { w: string }) {
  return <span className={`border-t border-dotted border-[#999] shrink-0 ${w}`} />;
}

function NavPanel() {
  const kids: [string, string][] = [["grid", "轴网(J)"], ["raft", "筏板基础(M)"], ["col", "框柱(Z)"], ["wall", "剪力墙(Q)"], ["beam", "梁(L)"], ["slab", "现浇板(B)"]];
  const groups = ["轴线", "柱", "墙", "门窗洞", "梁", "板", "空心楼盖", "基础", "其它", "自定义"];
  const Folder = () => (
    <svg width="16" height="13" viewBox="0 0 16 13" className="shrink-0">
      <path d="M1 2h5l1 2h8v8.500H1z" fill="#f7d57c" stroke="#b3923e" />
      <path d="M1.500 5h13v3h-13z" fill="#fff2c8" />
    </svg>
  );
  return (
    <div className="w-[138px] shrink-0 flex flex-col h-full overflow-hidden">
      <div className="h-[15px] bg-[#0a50e8] text-white flex items-center px-[1px] shrink-0">
        <span className="flex-1">模块导航栏</span>
        <Pin c="#fff" />
        <span className="ml-[7px] mr-[4px]"><XMark c="#fff" /></span>
      </div>
      <div className="mt-[2px] h-[22px] flex items-center justify-center border border-[#aca899] bg-[#ece9d8] shrink-0 border-b-2 border-r-2">工程设置</div>
      <div className="h-[22px] flex items-center justify-center border border-[#aca899] bg-[#ece9d8] shrink-0 border-b-2 border-r-2">绘图输入</div>
      <div className={`h-[28px] flex items-center pl-[6px] gap-[3px] shrink-0 ${BAR}`}>
        <svg width="16" height="14" viewBox="0 0 16 14"><path d="M4 1v6M1 4h6M11 6v6M8 9h6" stroke="#0f6a6a" strokeWidth="2" /></svg>
        <svg width="18" height="14" viewBox="0 0 18 14" className="ml-[2px]"><path d="M1 4h6M9 9h8" stroke="#0f6a6a" strokeWidth="2" /></svg>
      </div>
      <div className="h-[574px] bg-white border border-[#7f9db9] shrink-0 overflow-hidden">
        <div className="h-[16px] flex items-center pl-[9px]">
          <Expander open />
          <GuideH w="w-[5px]" />
          <Ic n="folder" />
          <span className="ml-[4px]">常用构件类型</span>
        </div>
        {kids.map(([ic, t]) => (
          <div key={t} className="h-[16px] flex items-center pl-[14px]">
            <span className="h-full w-[18px] border-l border-dotted border-[#999] shrink-0" />
            <span className="h-full border-l border-dotted border-[#999] shrink-0" />
            <GuideH w="w-[12px]" />
            <Ic n={ic} s={14} />
            <span className={`ml-[5px] whitespace-nowrap ${t === "梁(L)" ? "bg-[#ece9d8] h-[16px] leading-[16px]" : ""}`}>{t}</span>
          </div>
        ))}
        {groups.map((t) => (
          <div key={t} className="h-[16px] flex items-center pl-[9px]">
            <Expander />
            <GuideH w="w-[5px]" />
            <Folder />
            <span className="ml-[5px]">{t}</span>
          </div>
        ))}
        <div className="h-[16px] flex items-center pl-[9px]">
          <Expander />
          <GuideH w="w-[5px]" />
          <Folder />
          <span className="ml-[5px] whitespace-nowrap">CAD识别</span>
          <span className="ml-[6px]"><Ic n="cad" s={15} /></span>
          <span className="-mt-[9px] text-[8px] font-bold bg-[#ffe800] leading-[8px] text-[#111] font-['Liberation_Sans',sans-serif]">NEW</span>
        </div>
      </div>
      <div className="mt-[1px] h-[19px] flex items-center justify-center border border-[#aca899] border-b-2 border-r-2 shrink-0">单构件输入</div>
      <div className="mt-[2px] h-[16px] flex items-center justify-center border border-[#aca899] border-b-0 shrink-0">报表预览</div>
    </div>
  );
}

const ITEMS = ["KL1 (1)", "KL10 (7)", "KL101 (3)", "KL11 (1)", "KL12 (1)", "KL13 (10A)", "KL14 (9A)", "KL15 (7)", "KL16 (1)", "KL17 (5)"];

function PanelTitle({ t, boxed = false }: { t: string; boxed?: boolean }) {
  return (
    <div className="h-[15px] flex items-center border border-[#7a7868] bg-[#ece9d8] shrink-0 rounded-[2px]">
      <span className="flex-1 whitespace-nowrap">{t}</span>
      <span className={`w-[17px] h-[13px] flex items-center justify-center ${boxed ? "border border-b-2 border-r-2 border-[#222] bg-white" : ""}`}><Pin /></span>
      <span className="ml-[6px] mr-[4px] flex"><XMark /></span>
    </div>
  );
}

function ComponentList() {
  return (
    <div className="h-[249px] flex flex-col shrink-0">
      <PanelTitle t="构件列表" boxed />
      <div className={`mt-[2px] h-[25px] flex items-center pl-[3px] shrink-0 ${BAR}`}>
        <Ic n="add" s={17} />
        <span className="ml-[2px]">新建</span>
        <Caret ml="ml-[3px]" />
        <div className="ml-[5px]"><Ic n="del" s={13} /></div>
        <div className="ml-[9px]"><Ic n="dup" s={15} /></div>
      </div>
      <div className="h-[24px] flex items-center shrink-0 bg-[#ece9d8]">
        <div className="w-[210px] h-[24px] border border-[#7f9db9] bg-white flex items-center pl-[2px] text-[13px] text-[#8a8a8a] shrink-0">搜索构件...</div>
        <div className="flex-1 flex justify-center"><Ic n="search" /></div>
      </div>
      <div className="flex-1 min-h-0 border border-[#7f9db9] bg-white flex overflow-hidden mt-[1px]">
        <div className="flex-1 pt-[2px] overflow-hidden">
          <div className="h-[16px] flex items-center pl-[9px]">
            <Expander open />
            <span className="ml-[7px]"><Ic n="beam" s={14} /></span>
            <span className="ml-[5px]">梁</span>
          </div>
          {ITEMS.map((t, i) => (
            <div key={t} className="h-[16px] flex items-center pl-[31px]">
              <span className="h-full border-l border-dotted border-[#999] shrink-0" />
              <GuideH w="w-[12px]" />
              <Ic n="gear" s={12} />
              <span className={`ml-[5px] h-[16px] leading-[16px] pl-[2px] pr-[3px] whitespace-nowrap ${i === 0 ? "bg-[#316ac5]" : ""}`}>{t}</span>
            </div>
          ))}
        </div>
        <div className="w-[16px] flex flex-col bg-[#f4f3ee] pt-[2px] pb-[1px] shrink-0">
          <div className="h-[15px] bg-[#c4d4f4] border border-[#a7b9de] rounded-[2px] flex items-center justify-center">
            <svg width="9" height="6" viewBox="0 0 9 6"><path d="M1 5l3.500-4L8 5" fill="none" stroke="#234a84" strokeWidth="1.500" /></svg>
          </div>
          <div className="mt-[2px] h-[9px] bg-[#c9d8f4] border border-[#a7b9de] rounded-[2px]" />
          <div className="flex-1" />
          <div className="h-[15px] bg-[#c4d4f4] border border-[#a7b9de] rounded-[2px] flex items-center justify-center">
            <svg width="9" height="6" viewBox="0 0 9 6"><path d="M1 1l3.500 4L8 1" fill="none" stroke="#234a84" strokeWidth="1.500" /></svg>
          </div>
        </div>
      </div>
    </div>
  );
}

type Prop = [string, string, string, string];
const PROPS: Prop[] = [
  ["1", "名称", "L6 (21)", "sel"],
  ["2", "类别", "非框架梁", "b"],
  ["3", "截面宽度(mm)", "250", ""],
  ["4", "截面高度(mm)", "400", ""],
  ["5", "轴线距梁左边线距", "(125)", ""],
  ["6", "跨数量", "21", ""],
  ["7", "箍筋", "Φ6@200 (2)", "b"],
  ["8", "肢数", "2", "b"],
  ["9", "上部通长筋", "2 Φ14", "b"],
  ["10", "下部通长筋", "2 Φ14", "b"],
  ["11", "侧面构造或受扭筋", "", "b"],
  ["12", "拉筋", "", "b"],
  ["13", "其它箍筋", "", "b"],
  ["14", "备注", "", ""],
  ["15", "其它属性", "", "g"],
  ["23", "锚固搭接", "", "g"],
  ["38", "显示样式", "", "g"],
];

function PropEditor() {
  const cell = "h-[19px] border-r border-b border-[#bdbdbd] whitespace-nowrap overflow-hidden";
  return (
    <div className="flex-1 min-h-0 flex flex-col mt-[2px]">
      <PanelTitle t="属性编辑器" />
      <div className="h-[397px] mt-[2px] border border-[#7f9db9] bg-white overflow-hidden shrink-0 pl-px">
        <table className="table-fixed border-separate border-spacing-0 w-[231px]">
          <colgroup>
            <col className="w-[21px]" />
            <col className="w-[120px]" />
            <col className="w-[90px]" />
          </colgroup>
          <thead>
            <tr>
              <th className={`h-[23px] font-normal bg-linear-to-b from-[#fbfaf5] to-[#e8e5d5] ${cell}`} />
              <th className={`h-[23px] font-normal text-center bg-linear-to-b from-[#fbfaf5] to-[#e8e5d5] ${cell}`}>属性名称</th>
              <th className={`h-[23px] font-normal text-center text-[#800080] bg-linear-to-b from-[#fbdf9c] to-[#f2bd63] ${cell}`}>属性值</th>
            </tr>
          </thead>
          <tbody>
            {PROPS.map(([n, k, v, s]) => (
              <tr key={n}>
                <td className={`text-center ${cell} ${s === "sel" ? "bg-[#fbd68c] text-[#800080]" : "bg-[#f0efe6]"}`}>{n}</td>
                <td className={`${cell} ${s === "sel" ? "bg-[#316ac5] text-white pl-[20px]" : s === "g" ? "pl-[3px]" : "pl-[20px]"} ${s === "b" ? "text-[#0000ff]" : ""}`}>
                  {s === "g" ? (
                    <span className="flex items-center text-[#808080]">
                      <span className="w-[13px] h-[12px] border border-[#bbb] bg-[#eee] text-black flex items-center justify-center mr-[4px] text-[12px]">+</span>
                      {k}
                    </span>
                  ) : k}
                </td>
                <td className={`pl-[2px] ${cell} ${s === "sel" ? "bg-[#dde8f5]" : ""}`}>{v}</td>
              </tr>
            ))}
          </tbody>
        </table>
      </div>
    </div>
  );
}

function BottomGrid() {
  const cell = "h-[19px] border-r border-b border-[#bdbdbd] whitespace-nowrap overflow-hidden";
  const hd = "h-[19px] border-r border-b border-[#c8c6b6] whitespace-nowrap overflow-hidden font-normal text-center bg-linear-to-b from-[#fbfaf5] to-[#e8e5d5]";
  const rows = [1, 2, 3, 4, 5, 6];
  return (
    <div className="flex-1 min-h-0 mt-[2px] flex overflow-hidden">
      <div className="w-[13px] shrink-0 flex flex-col items-center pt-[4px] gap-[5px]">
        <span className="w-[9px] h-[9px] bg-[#e03c2c] rounded-[2px] flex items-center justify-center"><XMark c="#fff" /></span>
        <span className="w-[3px] flex-1 border-l-2 border-dotted border-[#a8a693]" />
      </div>
      <div className="flex-1 min-w-0 flex flex-col">
        <div className={`h-[29px] flex items-center shrink-0 ${BAR}`}>
          <div className="ml-[3px]"><Ic n="dup" s={15} /></div>
          <span className="ml-[6px]">复制跨数据</span>
          <div className="ml-[11px]"><Ic n="paste" s={15} /></div>
          <span className="ml-[1px] text-[#a8a8a8]">粘贴跨数据</span>
          <span className="ml-[9px] text-[#a8a8a8]">输入当前列数据</span>
          <span className="ml-[10px] text-[#a8a8a8]">删除当前列数据</span>
          <span className="ml-[10px]">页面设置</span>
          <span className="ml-[10px]">调换起始跨</span>
          <span className="ml-[11px]">悬臂钢筋代号</span>
        </div>
        <div className="flex-1 min-h-0 border-t border-l border-[#7f9db9] bg-white overflow-hidden">
          <table className="table-fixed border-separate border-spacing-0 w-[795px]">
            <colgroup>
              <col className="w-[30px]" /><col className="w-[41px]" /><col className="w-[82px]" /><col className="w-[81px]" /><col className="w-[101px]" />
              <col className="w-[71px]" /><col className="w-[147px]" /><col className="w-[41px]" /><col className="w-[81px]" /><col className="w-[120px]" />
            </colgroup>
            <thead>
              <tr>
                <th rowSpan={2} className={hd} />
                <th rowSpan={2} className={hd}>跨号</th>
                <th className={`${hd} !text-left`}>钢筋</th>
                <th colSpan={3} className={hd}>侧面钢筋</th>
                <th rowSpan={2} className={hd}>箍筋</th>
                <th rowSpan={2} className="h-[19px] border-r border-b border-[#c8c6b6] font-normal text-center text-[#800080] bg-linear-to-b from-[#fbdf9c] to-[#f2bd63]">肢数</th>
                <th rowSpan={2} className={hd}>次梁宽度</th>
                <th rowSpan={2} className={`${hd} !text-left pl-[14px]`}>次梁高度</th>
              </tr>
              <tr>
                <th className={hd}>下部钢筋</th>
                <th className={hd}>侧面通长筋</th>
                <th className={hd}>侧面原位标注筋</th>
                <th className={hd}>拉筋</th>
              </tr>
            </thead>
            <tbody>
              {rows.map((r) => {
                const sel = r === 1;
                const bg = sel ? "bg-[#a6c8ee]" : "";
                return (
                  <tr key={r}>
                    <td className={`text-center ${cell} ${sel ? "bg-[#fbd68c] text-[#800080]" : "bg-[#f0efe6]"}`}>{r}</td>
                    <td className={`${cell} ${bg} pl-[2px] !border-r-black`}>{r}</td>
                    <td className={`${cell} ${bg}`} />
                    <td className={`${cell} ${bg}`} />
                    <td className={`${cell} ${bg}`} />
                    <td className={`${cell} ${bg}`} />
                    <td className={`${cell} ${bg} pl-[2px]`}>{sel ? "Φ8@100/150" : "Φ6@200 (2)"}</td>
                    {sel ? (
                      <td className="h-[19px] bg-white relative outline-2 -outline-offset-1 outline-black">
                        <div className="flex items-center pl-[2px] h-full bg-[#a6c8ee]">
                          <span className="bg-[#316ac5] text-white px-px">2</span>
                          <span className="ml-auto mr-[1px] w-[14px] h-[14px] border border-[#34567a] rounded-[3px] bg-[#f2f2ec] text-[10px] font-bold flex items-center justify-center leading-none pb-[4px]">...</span>
                        </div>
                      </td>
                    ) : (
                      <td className={`${cell} pl-[2px]`}>2</td>
                    )}
                    <td className={`${cell} ${bg}`} />
                    <td className={`${cell} ${bg}`} />
                  </tr>
                );
              })}
            </tbody>
          </table>
        </div>
        <div className="h-[9px] flex shrink-0 bg-[#f4f3ee] border-t border-[#ccc]">
          <div className="w-[13px] bg-[#c9d8f4]" />
          <div className="ml-[460px] w-[213px] bg-[#c2d4f4] border border-[#9db4dc] rounded-[2px]" />
        </div>
      </div>
    </div>
  );
}

export default function App() {
  return (
    <div className="relative w-[1252px] h-[744px] overflow-hidden flex bg-[#ece9d8] text-[12px] leading-none text-black font-['Liberation_Serif','Noto_Sans_CJK_SC',serif]">
      <Browser />
      <div className="w-[3px] bg-[#0a40d8] shrink-0" />
      <div className="flex-1 min-w-0 flex flex-col">
        <Menu />
        <MainBar />
        <div className="flex-1 min-h-0 flex pt-[2px]">
          <div className="w-[2px] shrink-0 bg-[#a9b4c4]" />
          <NavPanel />
          <div className="w-[235px] ml-[6px] shrink-0 flex flex-col overflow-hidden">
            <ComponentList />
            <PropEditor />
          </div>
          <div className="flex-1 min-w-0 ml-[4px] flex flex-col">
            <Row1 />
            <div className="mt-[2px]"><Row2 /></div>
            <div className="mt-[2px]"><Row3 /></div>
            <Canvas />
            <StatusBar />
            <BottomGrid />
          </div>
        </div>
      </div>
      <svg width="1252" height="744" viewBox="0 0 1252 744" className="absolute inset-0 pointer-events-none">
        <path d="M88 425L106.900 423.400 106 427.200 954 631.600 954 632.400 105 431.200 104.100 435Z" fill="#f44040" />
        <path d="M961 622L945.400 608.100 943.700 611.700 671.300 485.700 670.700 486.300 942 615.300 940.300 618.900Z" fill="#f44040" />
        <path d="M668 487L686 481 683.600 477.800 1165.300 112.300 1164.700 111.700 681.200 474.600 678.800 471.400Z" fill="#f44040" />
      </svg>
    </div>
  );
}
